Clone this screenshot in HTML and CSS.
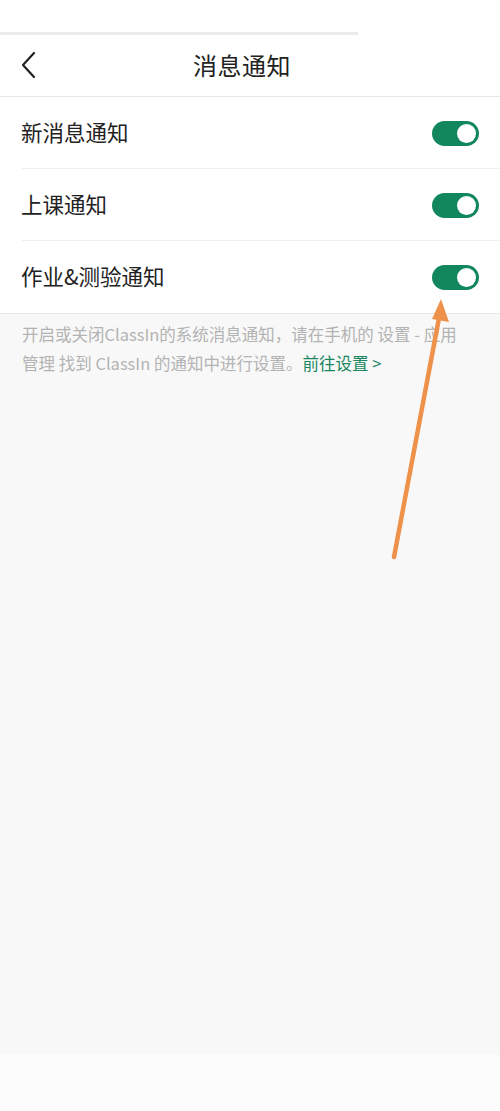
FILE: index.html
```html
<!DOCTYPE html>
<html lang="zh-CN">
<head>
<meta charset="utf-8">
<link rel="stylesheet" href="styles.css">
</head>
<body>
<div class="page">
  <div class="statusbar"></div>
  <div class="progress"></div>
  <header class="nav">
    <svg class="back" width="18" height="28" viewBox="0 0 18 28"><path d="M14 2 L3 14 L14 26" fill="none" stroke="#222" stroke-width="2.2" stroke-linecap="round" stroke-linejoin="round"/></svg>
    <h1 class="title">消息通知</h1>
  </header>
  <ul class="list">
    <li class="row"><span class="label">新消息通知</span><span class="switch"><span class="knob"></span></span></li>
    <li class="row"><span class="label">上课通知</span><span class="switch"><span class="knob"></span></span></li>
    <li class="row last"><span class="label">作业&amp;测验通知</span><span class="switch"><span class="knob"></span></span></li>
  </ul>
  <p class="hint">开启或关闭ClassIn的系统消息通知，请在手机的 设置 - 应用管理 找到 ClassIn 的通知中进行设置。<span class="link">前往设置 &gt;</span></p>
  <div class="spacer"></div>
  <div class="footer"></div>
  <svg class="arrow" width="500" height="1111" viewBox="0 0 500 1111">
    <line x1="394" y1="557" x2="439" y2="318" stroke="#ee914a" stroke-width="4.5" stroke-linecap="round"/>
    <polygon points="441,299 449,322 432,319" fill="#ee914a"/>
  </svg>
</div>
</body>
</html>
```
FILE: styles.css
```css
* { box-sizing: border-box; margin: 0; padding: 0; }
html, body { width: 500px; height: 1111px; }
body {
  font-family: "Noto Sans CJK SC", "Noto Sans", sans-serif;
  background: #f8f8f8;
  overflow: hidden;
}
.page {
  position: relative;
  width: 500px;
  height: 1111px;
  display: flex;
  flex-direction: column;
}
.statusbar { height: 32px; background: #fff; }
.progress {
  height: 4px;
  background: #fff;
}
.progress::before {
  content: "";
  display: block;
  width: 358px;
  height: 3px;
  background: #ebebeb;
}
.nav {
  height: 61px;
  background: #fff;
  border-bottom: 1px solid #e6e6e6;
  display: flex;
  align-items: center;
  justify-content: center;
  position: relative;
  padding-bottom: 4px;
}
.back { position: absolute; left: 20px; top: 15px; }
.title {
  font-size: 24px;
  font-weight: 400;
  color: #222;
  letter-spacing: 0.5px;
  margin-right: 16px;
}
.list { list-style: none; background: #fff; border-bottom: 1px solid #e9e9e9; }
.row {
  height: 72px;
  display: flex;
  align-items: center;
  justify-content: space-between;
  padding: 0 21px 0 21px;
  position: relative;
}
.label { font-size: 21.5px; color: #222; margin-bottom: 3px; }
.row::after {
  content: "";
  position: absolute;
  left: 22px;
  right: 0;
  bottom: 0;
  height: 1px;
  background: #efefef;
}
.row.last::after { display: none; }
.switch {
  width: 47px;
  height: 25px;
  border-radius: 13px;
  background: #12875e;
  display: flex;
  align-items: center;
  justify-content: flex-end;
  padding-right: 3px;
}
.knob { width: 19px; height: 19px; border-radius: 50%; background: #fff; }
.hint {
  padding: 6px 30px 0 22px;
  font-size: 16.5px;
  line-height: 29px;
  color: #b3b3b3;
}
.link { color: #18875f; }
.spacer { flex: 1; }
.footer { height: 56px; background: #fcfcfc; }
.arrow { position: absolute; left: 0; top: 0; pointer-events: none; }
```
